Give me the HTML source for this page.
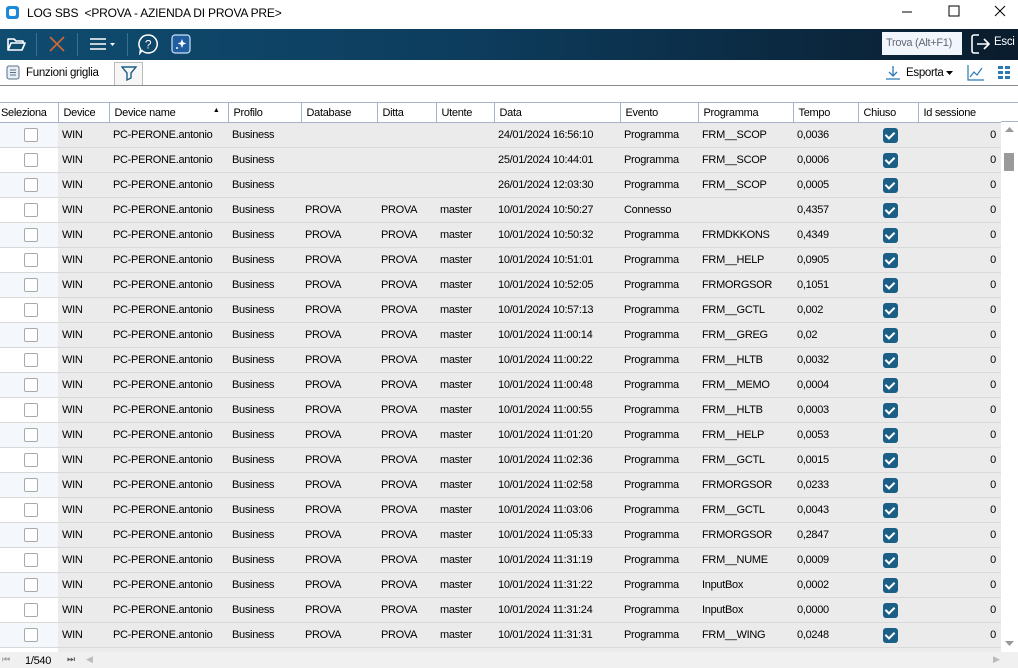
<!DOCTYPE html>
<html><head><meta charset="utf-8">
<style>
*{margin:0;padding:0;box-sizing:border-box}
body{width:1018px;height:668px;overflow:hidden;background:#fff;font-family:"Liberation Sans",sans-serif;font-size:11px;letter-spacing:-0.3px;color:#000;position:relative}
.title{position:absolute;left:0;top:0;width:1018px;height:29px;background:#fff}
.title .t{position:absolute;left:27px;top:6px;font-size:12px;letter-spacing:-0.2px}
.logo{position:absolute;left:6px;top:6px;width:13px;height:13px;background:#1e88d8;border-radius:3px}
.logo:after{content:"";position:absolute;left:3px;top:3px;width:7px;height:7px;background:#fff;border-radius:2px}
.tb{position:absolute;left:0;top:29px;width:1018px;height:31px;background:linear-gradient(90deg,#0f4c70 0%,#0d3d5e 45%,#0a1c2d 100%)}
.sep{position:absolute;top:4px;width:1px;height:23px;background:#3f6f8f}
.tb2{position:absolute;left:0;top:60px;width:1018px;height:26px;background:#fff;border-bottom:1px solid #8a8a8a}
.grid{position:absolute;left:0;top:102px;width:1001px;height:550px;overflow:hidden}
table{border-collapse:collapse;table-layout:fixed;width:1001px}
th{height:20px;font-weight:normal;text-align:left;padding-left:5px;border:1px solid #a7b3c6;background:#fff;white-space:nowrap;overflow:hidden;position:relative}
td{height:25px;padding-left:4px;background:#ebebeb;border-bottom:1px solid #d9d9d9;white-space:nowrap;overflow:hidden}
td.s{background:#f4f8fc}
tr.e td.s{background:#fff}
td.r{text-align:right;padding-right:5px}
.cb{display:block;margin:0 auto;width:14px;height:14px;border:1px solid #aaa;border-radius:2px;background:#fff}
.ck{display:block;margin:0 auto;width:15px;height:15px;border-radius:3px;background:#1b5f87;position:relative}
.ck:after{content:"";position:absolute;left:4px;top:2px;width:4px;height:7px;border:solid #fff;border-width:0 2px 2px 0;transform:rotate(45deg)}
.vs{position:absolute;left:1001px;top:122px;width:17px;height:530px;background:#fff}
.bot{position:absolute;left:0;top:652px;width:1018px;height:16px;background:#f0f0f0;font-size:11px}
</style></head><body>
<div class="title"><div class="logo"></div><div class="t">LOG SBS&nbsp; &lt;PROVA - AZIENDA DI PROVA PRE&gt;</div>
<svg style="position:absolute;left:900px;top:4px" width="110" height="16"><line x1="2" y1="8" x2="12" y2="8" stroke="#000"/><rect x="49" y="2" width="10" height="10" fill="none" stroke="#000"/><path d="M95 2l10 10M105 2l-10 10" stroke="#000"/></svg>
</div>
<div class="tb">
<svg style="position:absolute;left:6px;top:7px" width="20" height="16"><path d="M2 3h6l2 2h7v2H5L2 14zM2 14l3-7h14l-3 7z" fill="none" stroke="#fff" stroke-width="1.6" stroke-linejoin="round"/></svg>
<div class="sep" style="left:36px"></div>
<svg style="position:absolute;left:48px;top:6px" width="18" height="18"><path d="M2 2l14 14M16 2L2 16" stroke="#d06a32" stroke-width="1.6"/></svg>
<div class="sep" style="left:77px"></div>
<svg style="position:absolute;left:89px;top:8px" width="30" height="14"><path d="M1 2h16M1 7h16M1 12h16" stroke="#fff" stroke-width="1.5"/><path d="M21 6h5l-2.5 3z" fill="#fff"/></svg>
<div class="sep" style="left:127px"></div>
<svg style="position:absolute;left:137px;top:4px" width="22" height="22"><path d="M11 2a9 9 0 1 1-6 15.5L3 20l.5-4A9 9 0 0 1 11 2z" fill="none" stroke="#fff" stroke-width="1.5"/><text x="11" y="15.5" font-size="12" fill="#fff" text-anchor="middle" font-family="Liberation Sans">?</text></svg>
<svg style="position:absolute;left:171px;top:5px" width="21" height="20"><rect x="1" y="1" width="18" height="18" rx="3" fill="#1f5fa0" stroke="#cfe2f5" stroke-width="1.2"/><path d="M11 5l1.2 3.2 3.2 1.2-3.2 1.2L11 14l-1.2-3.4L6.6 9.4l3.2-1.2z" fill="#fff"/><circle cx="6" cy="14" r="1" fill="#fff"/></svg>
<div style="position:absolute;left:882px;top:3px;width:80px;height:23px;background:#f0f6fc;color:#667;padding:5px 0 0 4px;font-size:11px;white-space:nowrap">Trova (Alt+F1)</div>
<svg style="position:absolute;left:970px;top:4px" width="22" height="22"><path d="M9 2H4a2 2 0 0 0-2 2v14a2 2 0 0 0 2 2h5" fill="none" stroke="#fff" stroke-width="1.6"/><path d="M7 11h12M14 6l5 5-5 5" fill="none" stroke="#fff" stroke-width="1.6"/></svg>
<div style="position:absolute;left:994px;top:7px;color:#fff;font-size:11.5px">Esci</div>
</div>
<div class="tb2">
<svg style="position:absolute;left:6px;top:5px" width="15" height="15"><rect x="1" y="1" width="12" height="13" rx="2" fill="#e6eef6" stroke="#5a6f85"/><path d="M4 5h6M4 7.5h6M4 10h6" stroke="#5a6f85"/></svg>
<div style="position:absolute;left:26px;top:7px;font-size:11.5px">Funzioni griglia</div>
<div style="position:absolute;left:114px;top:2px;width:29px;height:23px;border:1px solid #bbb;border-bottom:none;background:#f6f6f6"></div>
<svg style="position:absolute;left:121px;top:6px" width="16" height="15"><path d="M1 1h14l-5 6v5l-4 2V7z" fill="none" stroke="#1b5f87" stroke-width="1.4"/></svg>
<svg style="position:absolute;left:885px;top:5px" width="16" height="16"><path d="M8 1v10M4 7l4 4 4-4M1 14h14" fill="none" stroke="#2a7ab8" stroke-width="1.3"/></svg>
<div style="position:absolute;left:906px;top:7px;font-size:11.5px">Esporta</div>
<svg style="position:absolute;left:946px;top:11px" width="8" height="5"><path d="M0 0h7l-3.5 4z" fill="#000"/></svg>
<svg style="position:absolute;left:967px;top:4px" width="18" height="17"><path d="M1 1v15h16" fill="none" stroke="#2a7ab8" stroke-width="1.2"/><path d="M3 13l4-5 3 3 5-7" fill="none" stroke="#2a7ab8" stroke-width="1.2"/></svg>
<svg style="position:absolute;left:998px;top:6px" width="14" height="14"><g fill="#2a7ab8"><rect x="0" y="0" width="5" height="3"/><rect x="7" y="0" width="5" height="3"/><rect x="0" y="5" width="5" height="3"/><rect x="7" y="5" width="5" height="3"/><rect x="0" y="10" width="5" height="3"/><rect x="7" y="10" width="5" height="3"/></g></svg>
</div>
<div class="grid"><table>
<colgroup><col style="width:58px"><col style="width:51px"><col style="width:119px"><col style="width:73px"><col style="width:76px"><col style="width:59px"><col style="width:58px"><col style="width:126px"><col style="width:78px"><col style="width:95px"><col style="width:65px"><col style="width:60px"><col style="width:83px"></colgroup>
<tr><th style="padding-left:1px;border-left:none">Seleziona</th><th>Device</th><th>Device name<span style="position:absolute;right:8px;top:4px;font-size:7px">▲</span></th><th>Profilo</th><th>Database</th><th>Ditta</th><th>Utente</th><th>Data</th><th>Evento</th><th>Programma</th><th>Tempo</th><th>Chiuso</th><th>Id sessione</th></tr>
<tr><td class="s"><i class="cb"></i></td><td>WIN</td><td>PC-PERONE.antonio</td><td>Business</td><td></td><td></td><td></td><td>24/01/2024 16:56:10</td><td>Programma</td><td>FRM__SCOP</td><td>0,0036</td><td><i class="ck"></i></td><td class="r">0</td></tr>
<tr class="e"><td class="s"><i class="cb"></i></td><td>WIN</td><td>PC-PERONE.antonio</td><td>Business</td><td></td><td></td><td></td><td>25/01/2024 10:44:01</td><td>Programma</td><td>FRM__SCOP</td><td>0,0006</td><td><i class="ck"></i></td><td class="r">0</td></tr>
<tr><td class="s"><i class="cb"></i></td><td>WIN</td><td>PC-PERONE.antonio</td><td>Business</td><td></td><td></td><td></td><td>26/01/2024 12:03:30</td><td>Programma</td><td>FRM__SCOP</td><td>0,0005</td><td><i class="ck"></i></td><td class="r">0</td></tr>
<tr class="e"><td class="s"><i class="cb"></i></td><td>WIN</td><td>PC-PERONE.antonio</td><td>Business</td><td>PROVA</td><td>PROVA</td><td>master</td><td>10/01/2024 10:50:27</td><td>Connesso</td><td></td><td>0,4357</td><td><i class="ck"></i></td><td class="r">0</td></tr>
<tr><td class="s"><i class="cb"></i></td><td>WIN</td><td>PC-PERONE.antonio</td><td>Business</td><td>PROVA</td><td>PROVA</td><td>master</td><td>10/01/2024 10:50:32</td><td>Programma</td><td>FRMDKKONS</td><td>0,4349</td><td><i class="ck"></i></td><td class="r">0</td></tr>
<tr class="e"><td class="s"><i class="cb"></i></td><td>WIN</td><td>PC-PERONE.antonio</td><td>Business</td><td>PROVA</td><td>PROVA</td><td>master</td><td>10/01/2024 10:51:01</td><td>Programma</td><td>FRM__HELP</td><td>0,0905</td><td><i class="ck"></i></td><td class="r">0</td></tr>
<tr><td class="s"><i class="cb"></i></td><td>WIN</td><td>PC-PERONE.antonio</td><td>Business</td><td>PROVA</td><td>PROVA</td><td>master</td><td>10/01/2024 10:52:05</td><td>Programma</td><td>FRMORGSOR</td><td>0,1051</td><td><i class="ck"></i></td><td class="r">0</td></tr>
<tr class="e"><td class="s"><i class="cb"></i></td><td>WIN</td><td>PC-PERONE.antonio</td><td>Business</td><td>PROVA</td><td>PROVA</td><td>master</td><td>10/01/2024 10:57:13</td><td>Programma</td><td>FRM__GCTL</td><td>0,002</td><td><i class="ck"></i></td><td class="r">0</td></tr>
<tr><td class="s"><i class="cb"></i></td><td>WIN</td><td>PC-PERONE.antonio</td><td>Business</td><td>PROVA</td><td>PROVA</td><td>master</td><td>10/01/2024 11:00:14</td><td>Programma</td><td>FRM__GREG</td><td>0,02</td><td><i class="ck"></i></td><td class="r">0</td></tr>
<tr class="e"><td class="s"><i class="cb"></i></td><td>WIN</td><td>PC-PERONE.antonio</td><td>Business</td><td>PROVA</td><td>PROVA</td><td>master</td><td>10/01/2024 11:00:22</td><td>Programma</td><td>FRM__HLTB</td><td>0,0032</td><td><i class="ck"></i></td><td class="r">0</td></tr>
<tr><td class="s"><i class="cb"></i></td><td>WIN</td><td>PC-PERONE.antonio</td><td>Business</td><td>PROVA</td><td>PROVA</td><td>master</td><td>10/01/2024 11:00:48</td><td>Programma</td><td>FRM__MEMO</td><td>0,0004</td><td><i class="ck"></i></td><td class="r">0</td></tr>
<tr class="e"><td class="s"><i class="cb"></i></td><td>WIN</td><td>PC-PERONE.antonio</td><td>Business</td><td>PROVA</td><td>PROVA</td><td>master</td><td>10/01/2024 11:00:55</td><td>Programma</td><td>FRM__HLTB</td><td>0,0003</td><td><i class="ck"></i></td><td class="r">0</td></tr>
<tr><td class="s"><i class="cb"></i></td><td>WIN</td><td>PC-PERONE.antonio</td><td>Business</td><td>PROVA</td><td>PROVA</td><td>master</td><td>10/01/2024 11:01:20</td><td>Programma</td><td>FRM__HELP</td><td>0,0053</td><td><i class="ck"></i></td><td class="r">0</td></tr>
<tr class="e"><td class="s"><i class="cb"></i></td><td>WIN</td><td>PC-PERONE.antonio</td><td>Business</td><td>PROVA</td><td>PROVA</td><td>master</td><td>10/01/2024 11:02:36</td><td>Programma</td><td>FRM__GCTL</td><td>0,0015</td><td><i class="ck"></i></td><td class="r">0</td></tr>
<tr><td class="s"><i class="cb"></i></td><td>WIN</td><td>PC-PERONE.antonio</td><td>Business</td><td>PROVA</td><td>PROVA</td><td>master</td><td>10/01/2024 11:02:58</td><td>Programma</td><td>FRMORGSOR</td><td>0,0233</td><td><i class="ck"></i></td><td class="r">0</td></tr>
<tr class="e"><td class="s"><i class="cb"></i></td><td>WIN</td><td>PC-PERONE.antonio</td><td>Business</td><td>PROVA</td><td>PROVA</td><td>master</td><td>10/01/2024 11:03:06</td><td>Programma</td><td>FRM__GCTL</td><td>0,0043</td><td><i class="ck"></i></td><td class="r">0</td></tr>
<tr><td class="s"><i class="cb"></i></td><td>WIN</td><td>PC-PERONE.antonio</td><td>Business</td><td>PROVA</td><td>PROVA</td><td>master</td><td>10/01/2024 11:05:33</td><td>Programma</td><td>FRMORGSOR</td><td>0,2847</td><td><i class="ck"></i></td><td class="r">0</td></tr>
<tr class="e"><td class="s"><i class="cb"></i></td><td>WIN</td><td>PC-PERONE.antonio</td><td>Business</td><td>PROVA</td><td>PROVA</td><td>master</td><td>10/01/2024 11:31:19</td><td>Programma</td><td>FRM__NUME</td><td>0,0009</td><td><i class="ck"></i></td><td class="r">0</td></tr>
<tr><td class="s"><i class="cb"></i></td><td>WIN</td><td>PC-PERONE.antonio</td><td>Business</td><td>PROVA</td><td>PROVA</td><td>master</td><td>10/01/2024 11:31:22</td><td>Programma</td><td>InputBox</td><td>0,0002</td><td><i class="ck"></i></td><td class="r">0</td></tr>
<tr class="e"><td class="s"><i class="cb"></i></td><td>WIN</td><td>PC-PERONE.antonio</td><td>Business</td><td>PROVA</td><td>PROVA</td><td>master</td><td>10/01/2024 11:31:24</td><td>Programma</td><td>InputBox</td><td>0,0000</td><td><i class="ck"></i></td><td class="r">0</td></tr>
<tr><td class="s"><i class="cb"></i></td><td>WIN</td><td>PC-PERONE.antonio</td><td>Business</td><td>PROVA</td><td>PROVA</td><td>master</td><td>10/01/2024 11:31:31</td><td>Programma</td><td>FRM__WING</td><td>0,0248</td><td><i class="ck"></i></td><td class="r">0</td></tr>
<tr class="e"><td class="s"><i class="cb"></i></td><td>WIN</td><td>PC-PERONE.antonio</td><td>Business</td><td>PROVA</td><td>PROVA</td><td>master</td><td>10/01/2024 11:31:40</td><td>Programma</td><td>FRM__WING</td><td>0,0010</td><td><i class="ck"></i></td><td class="r">0</td></tr>
</table></div>
<div style="position:absolute;left:1001px;top:102px;width:17px;height:20px;border-top:1px solid #a7b3c6;border-bottom:1px solid #a7b3c6;background:#fff"></div>
<div class="vs">
<svg style="position:absolute;left:4px;top:5px" width="10" height="6"><path d="M0 5h9L4.5 0z" fill="#999"/></svg>
<div style="position:absolute;left:3px;top:31px;width:10px;height:18px;background:#9a9a9a"></div>
<svg style="position:absolute;left:4px;top:519px" width="10" height="6"><path d="M0 0h9L4.5 5z" fill="#999"/></svg>
</div>
<div class="bot">
<span style="position:absolute;left:2px;top:2px;color:#999;font-size:9px">⏮</span>
<span style="position:absolute;left:25px;top:3px">1/540</span>
<span style="position:absolute;left:67px;top:2px;color:#555;font-size:9px">⏭</span>
<span style="position:absolute;left:86px;top:2px;color:#bbb;font-size:9px">◀</span>
<span style="position:absolute;left:993px;top:2px;color:#bbb;font-size:9px">▶</span>
</div>
</body></html>
